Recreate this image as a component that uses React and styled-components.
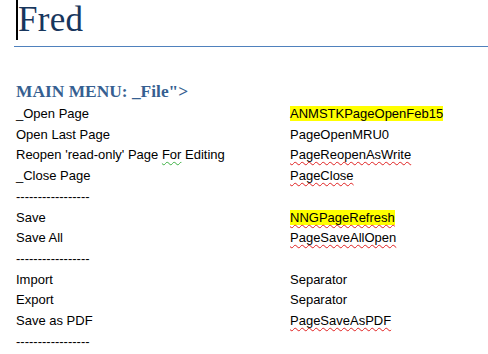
import styled, { createGlobalStyle } from "styled-components";

const GlobalStyle = createGlobalStyle`
  body {
    margin: 0;
    background: #fff;
  }
`;

const Page = styled.div`
  width: 488px;
  height: 354px;
  overflow: hidden;
  padding-left: 16px;
  box-sizing: border-box;
`;

const TitleBlock = styled.div`
  display: flex;
  align-items: flex-start;
  margin-left: -2px;
  padding-left: 2px;
  padding-bottom: 6px;
  border-bottom: 1px solid #4f81bd;
`;

const Caret = styled.span`
  width: 2px;
  height: 40px;
  background: #000;
  flex-shrink: 0;
`;

const Title = styled.h1`
  margin: 0;
  font-family: "Liberation Serif", serif;
  font-weight: normal;
  font-size: 35px;
  line-height: 40px;
  color: #17365d;
  letter-spacing: 0.3px;
`;

const Heading = styled.h2`
  margin: 34px 0 3px;
  font-family: "Liberation Serif", serif;
  font-weight: bold;
  font-size: 17.4px;
  line-height: 20px;
  color: #365f91;
`;

const MenuGrid = styled.div`
  display: grid;
  grid-template-columns: 274px 1fr;
  font-family: "Liberation Sans", Arial, sans-serif;
  font-size: 13px;
  line-height: 20.7px;
  color: #000;
`;

const Row = styled.div`
  display: contents;
`;

const Cell = styled.div`
  white-space: nowrap;
`;

const Squiggle = styled.span`
  text-decoration: underline wavy
    ${(p) => (p.$tone === "grammar" ? "#3cb043" : "#e02020")};
  text-decoration-thickness: 1px;
  text-underline-offset: 2px;
  text-decoration-skip-ink: none;
`;

const Command = styled.span`
  background: ${(p) => (p.$highlight ? "#ffff00" : "transparent")};
  ${(p) =>
    p.$misspelt &&
    `
    text-decoration: underline wavy #e02020;
    text-decoration-thickness: 1px;
    text-underline-offset: 2px;
    text-decoration-skip-ink: none;
  `}
`;

const DASHES = "-----------------";

const menuRows = [
  { label: "_Open Page", command: "ANMSTKPageOpenFeb15", highlight: true },
  { label: "Open Last Page", command: "PageOpenMRU0" },
  {
    label: (
      <>
        Reopen 'read-only' Page <Squiggle $tone="grammar">For</Squiggle> Editing
      </>
    ),
    command: "PageReopenAsWrite",
    misspelt: true,
  },
  { label: "_Close Page", command: "PageClose", misspelt: true },
  { label: DASHES },
  { label: "Save", command: "NNGPageRefresh", highlight: true, misspelt: true },
  { label: "Save All", command: "PageSaveAllOpen", misspelt: true },
  { label: DASHES },
  { label: "Import", command: "Separator" },
  { label: "Export", command: "Separator" },
  { label: "Save as PDF", command: "PageSaveAsPDF", misspelt: true },
  { label: DASHES },
];

function App() {
  return (
    <>
      <GlobalStyle />
      <Page>
        <TitleBlock>
          <Caret />
          <Title>Fred</Title>
        </TitleBlock>
        <Heading>MAIN MENU: _File"&gt;</Heading>
        <MenuGrid>
          {menuRows.map((row, i) => (
            <Row key={i}>
              <Cell>{row.label}</Cell>
              <Cell>
                {row.command && (
                  <Command $highlight={row.highlight} $misspelt={row.misspelt}>
                    {row.command}
                  </Command>
                )}
              </Cell>
            </Row>
          ))}
        </MenuGrid>
      </Page>
    </>
  );
}

export default App;
